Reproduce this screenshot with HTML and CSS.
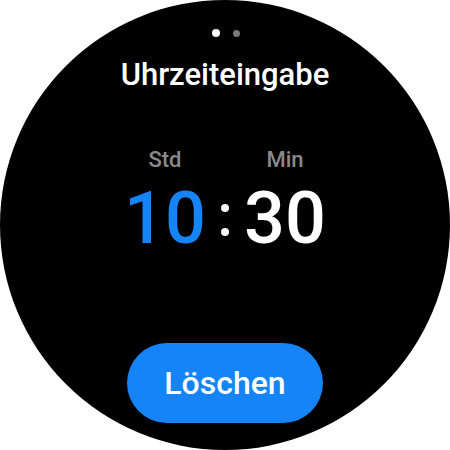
FILE: index.html
```html
<!DOCTYPE html>
<html lang="de">
<head>
<meta charset="utf-8">
<link rel="stylesheet" href="styles.css">
</head>
<body>
<div class="watch">
  <div class="pager">
    <span class="dot dot-active"></span>
    <span class="dot dot-idle"></span>
  </div>
  <div class="title">Uhrzeiteingabe</div>
  <div class="picker">
    <div class="label">Std</div>
    <div class="spacer"></div>
    <div class="label">Min</div>
    <div class="digits digits-active">10</div>
    <div class="colon"><span class="cdot"></span><span class="cdot"></span></div>
    <div class="digits">30</div>
  </div>
  <button class="clear">Löschen</button>
</div>
</body>
</html>
```

FILE: styles.css
```css
html, body {
  margin: 0;
  padding: 0;
  background: #ffffff;
}
body {
  width: 450px;
  height: 450px;
  overflow: hidden;
  font-family: Roboto, "Noto Sans", sans-serif;
}
.watch {
  width: 450px;
  height: 450px;
  border-radius: 50%;
  background: #000000;
  display: flex;
  flex-direction: column;
  align-items: center;
  box-sizing: border-box;
}
.pager {
  margin-top: 29px;
  height: 8px;
  display: flex;
  align-items: center;
  gap: 13px;
  margin-left: 1px;
}
.dot {
  display: block;
  border-radius: 50%;
}
.dot-active {
  width: 8px;
  height: 8px;
  background: #ffffff;
}
.dot-idle {
  width: 7px;
  height: 7px;
  background: #7a7a7a;
}
.title {
  margin-top: 22px;
  font-size: 31px;
  line-height: 31px;
  font-weight: 500;
  color: #ffffff;
}
.picker {
  margin-top: 59px;
  display: grid;
  grid-template-columns: 100px 20px 100px;
  grid-template-rows: 22px 72px;
  row-gap: 12px;
  justify-items: center;
}
.label {
  font-size: 22px;
  line-height: 22px;
  font-weight: 500;
  color: #8a8a8a;
}
.digits {
  font-size: 72px;
  line-height: 72px;
  font-weight: 500;
  color: #ffffff;
}
.digits-active {
  color: #1584f8;
}
.colon {
  display: flex;
  flex-direction: column;
  align-items: center;
  padding-top: 21px;
  gap: 16px;
}
.cdot {
  display: block;
  width: 8px;
  height: 8px;
  border-radius: 50%;
  background: #ffffff;
}
.clear {
  margin-top: 88px;
  width: 196px;
  height: 80px;
  border: none;
  border-radius: 40px;
  background: #1584f8;
  color: #ffffff;
  font-family: Roboto, "Noto Sans", sans-serif;
  font-size: 32px;
  font-weight: 500;
  padding: 0;
}
```
